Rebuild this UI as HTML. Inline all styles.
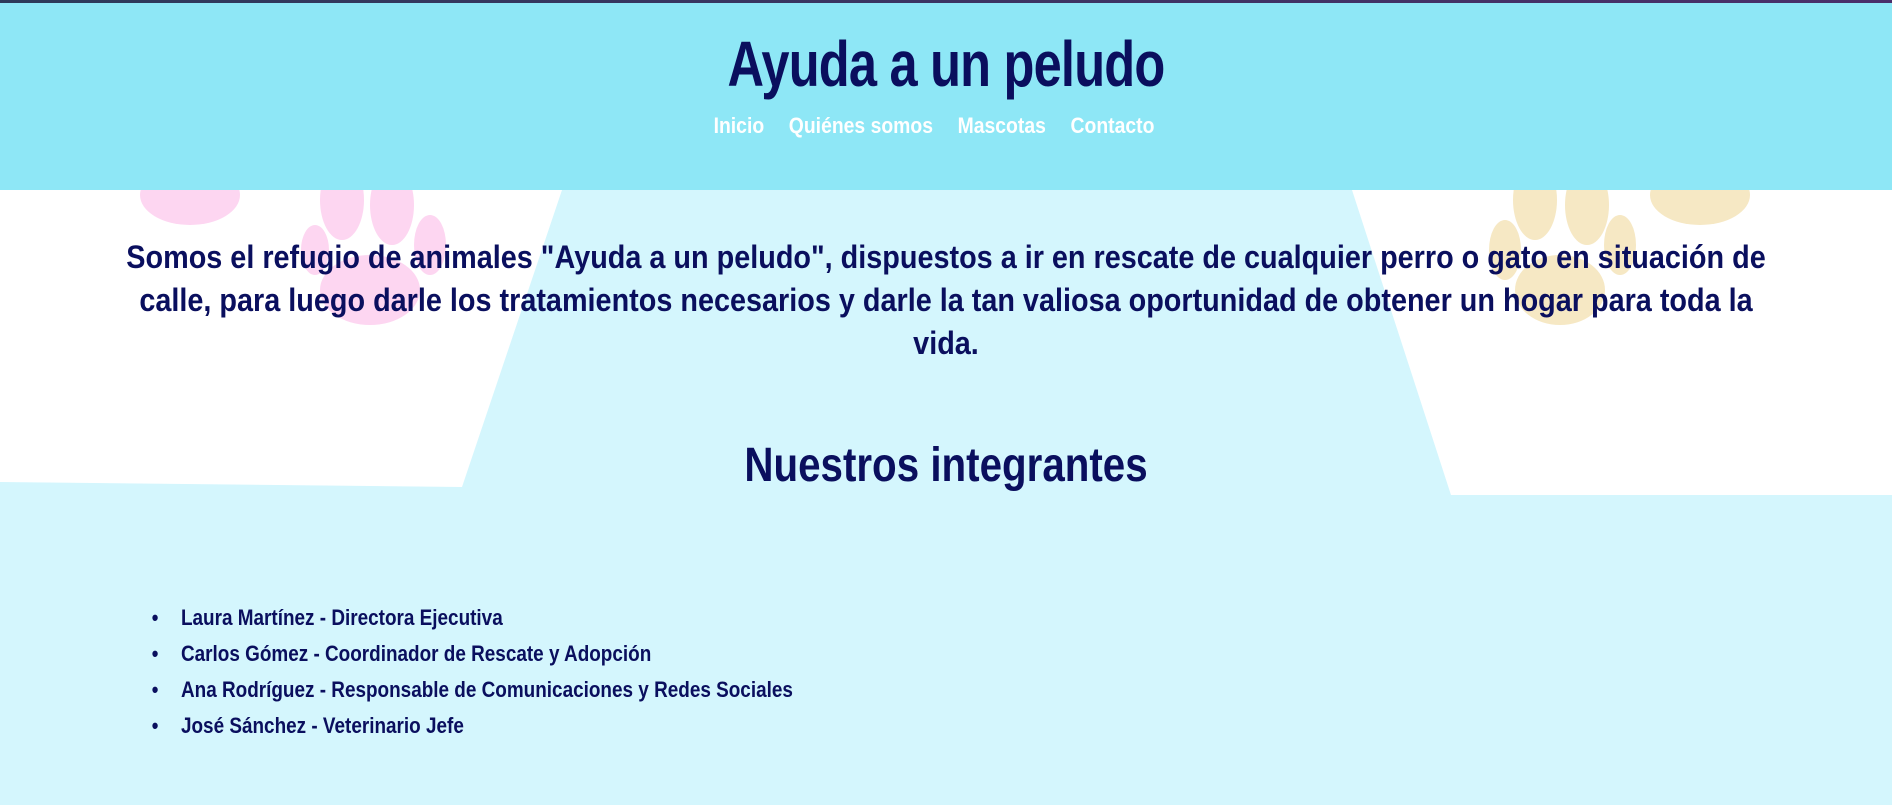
<!DOCTYPE html>
<html><head><meta charset="utf-8"><style>
html,body{margin:0;padding:0}
body{width:1892px;height:805px;overflow:hidden;position:relative;background:#d4f6fd;font-family:"Liberation Sans",sans-serif;color:#0a0f5e;font-weight:bold}
.top{position:absolute;left:0;top:0;width:1892px;height:3px;background:linear-gradient(90deg,#2d3a5a,#4a2f6a)}
header{position:absolute;left:0;top:3px;width:1892px;height:187px;background:#8ee7f6;text-align:center}
h1{margin:0;position:absolute;top:24px;width:100%;font-size:64px;font-weight:bold;color:#0a0f5e;letter-spacing:-1px;transform:scaleX(0.79)}
nav{position:absolute;top:110px;left:-12px;width:100%;font-size:22px;color:#fff;transform:scaleX(0.88)}
nav span{margin:0 14px}
svg.bg{position:absolute;left:0;top:190px}
p{position:absolute;left:-28px;width:1948px;top:236px;margin:0;text-align:center;font-size:32px;line-height:43px;transform:scaleX(0.90)}
h2{position:absolute;top:438px;width:100%;text-align:center;margin:0;font-size:48px;transform:scaleX(0.84)}
ul{position:absolute;top:600px;left:144px;margin:0;padding-left:43px;font-size:22px;line-height:36px;transform:scaleX(0.86);transform-origin:left top;white-space:nowrap;list-style:none}
li{position:relative}
li::before{content:"•";position:absolute;left:-34px}
</style></head><body>
<div class="top"></div>
<svg class="bg" width="1892" height="615" viewBox="0 190 1892 615">
<polygon points="0,190 562,190 462,487 0,482" fill="#fff"/>
<polygon points="1352,190 1892,190 1892,495 1451,495" fill="#fff"/>
<g fill="#fdd6f1">
<ellipse cx="190" cy="195" rx="50" ry="30"/>
<ellipse cx="342" cy="200" rx="22" ry="40"/>
<ellipse cx="392" cy="205" rx="22" ry="40"/>
<ellipse cx="430" cy="245" rx="16" ry="30"/>
<ellipse cx="315" cy="250" rx="14" ry="25"/>
<ellipse cx="370" cy="290" rx="50" ry="35"/>
</g>
<g fill="#f6e8c4">
<ellipse cx="1505" cy="250" rx="16" ry="30"/>
<ellipse cx="1535" cy="200" rx="22" ry="40"/>
<ellipse cx="1587" cy="205" rx="22" ry="40"/>
<ellipse cx="1620" cy="245" rx="16" ry="30"/>
<ellipse cx="1560" cy="290" rx="45" ry="35"/>
<ellipse cx="1700" cy="195" rx="50" ry="30"/>
</g>
</svg>
<header>
<h1>Ayuda a un peludo</h1>
<nav><span>Inicio</span><span>Quiénes somos</span><span>Mascotas</span><span>Contacto</span></nav>
</header>
<p>Somos el refugio de animales "Ayuda a un peludo", dispuestos a ir en rescate de cualquier perro o gato en situación de<br>calle, para luego darle los tratamientos necesarios y darle la tan valiosa oportunidad de obtener un hogar para toda la<br>vida.</p>
<h2>Nuestros integrantes</h2>
<ul>
<li>Laura Martínez - Directora Ejecutiva</li>
<li>Carlos Gómez - Coordinador de Rescate y Adopción</li>
<li>Ana Rodríguez - Responsable de Comunicaciones y Redes Sociales</li>
<li>José Sánchez - Veterinario Jefe</li>
</ul>
</body></html>
